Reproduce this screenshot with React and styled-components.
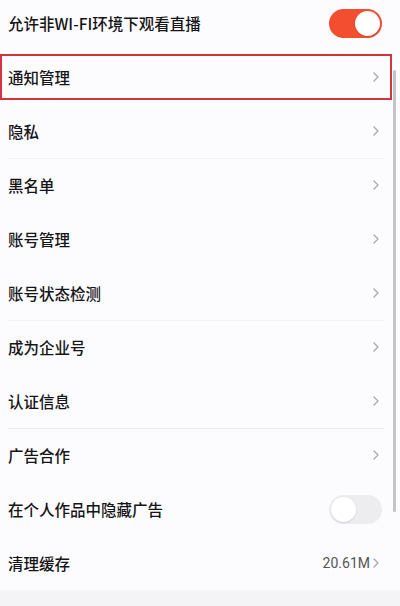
import React from 'react'
import styled, { createGlobalStyle } from 'styled-components'

const GlobalStyle = createGlobalStyle`
  html, body {
    margin: 0;
    padding: 0;
    background: #fcfbfd;
    font-family: "Noto Sans CJK SC", "Noto Sans", sans-serif;
  }
`

const Page = styled.div`
  position: relative;
  width: 400px;
  height: 606px;
  overflow: hidden;
  background: #f4f3f6;
`

const List = styled.div`
  margin-top: -4px;
  background: #fcfbfd;
  display: flex;
  flex-direction: column;
`

const Row = styled.div`
  position: relative;
  height: 54px;
  display: flex;
  align-items: center;
  justify-content: space-between;
  padding: 0 ${(p) => (p.$toggle ? '18px' : '21px')} 0 8px;
  box-sizing: border-box;

  & + &::before {
    content: '';
    position: absolute;
    top: 0;
    left: 8px;
    right: 16px;
    height: 1px;
    background: ${(p) => (p.$strongLine ? '#ececef' : '#f3f2f5')};
  }

  ${(p) =>
    p.$highlight &&
    `
    &::after {
      content: '';
      position: absolute;
      left: 0;
      right: 8px;
      top: 4px;
      bottom: 4px;
      border: 2px solid #d4333f;
      box-sizing: border-box;
    }
  `}
`

const Label = styled.span`
  font-size: 15.5px;
  font-weight: 500;
  color: #151517;
`

const Right = styled.div`
  display: flex;
  align-items: center;
  gap: 3px;
`

const Value = styled.span`
  font-family: "Roboto", "Noto Sans", sans-serif;
  font-size: 14px;
  color: #555;
`

const Toggle = styled.div`
  position: relative;
  width: 53px;
  height: 29px;
  border-radius: 15px;
  background: ${(p) => (p.$on ? '#f24e2f' : '#ededef')};

  &::after {
    content: '';
    position: absolute;
    top: 2px;
    ${(p) => (p.$on ? 'right: 2px;' : 'left: 2px;')}
    width: 25px;
    height: 25px;
    border-radius: 50%;
    background: #fff;
    box-shadow: 0 1px 2px rgba(0, 0, 0, 0.12);
  }
`

const ScrollBar = styled.div`
  position: absolute;
  right: 4px;
  top: 70px;
  width: 3px;
  height: 442px;
  border-radius: 2px;
  background: #c4c4c8;
`

const Chevron = () => (
  <svg width="6" height="10" viewBox="0 0 6 10">
    <path d="M1 1l4 4-4 4" fill="none" stroke="#a8a8ad" strokeWidth="1.3" strokeLinecap="round" strokeLinejoin="round" />
  </svg>
)

const items = [
  { label: '允许非WI-FI环境下观看直播', toggle: true, on: true },
  { label: '通知管理', highlight: true },
  { label: '隐私' },
  { label: '黑名单' },
  { label: '账号管理', strong: true },
  { label: '账号状态检测' },
  { label: '成为企业号' },
  { label: '认证信息', strong: true },
  { label: '广告合作', strong: true },
  { label: '在个人作品中隐藏广告', toggle: true, on: false, strong: true },
  { label: '清理缓存', value: '20.61M' },
]

const App = () => {
  return (
    <Page>
      <GlobalStyle />
      <List>
        {items.map((item) => (
          <Row
            key={item.label}
            $highlight={item.highlight}
            $strongLine={item.strong}
            $toggle={item.toggle}
          >
            <Label>{item.label}</Label>
            {item.toggle ? (
              <Toggle $on={item.on} />
            ) : (
              <Right>
                {item.value && <Value>{item.value}</Value>}
                <Chevron />
              </Right>
            )}
          </Row>
        ))}
      </List>
      <ScrollBar />
    </Page>
  )
}

export default App
